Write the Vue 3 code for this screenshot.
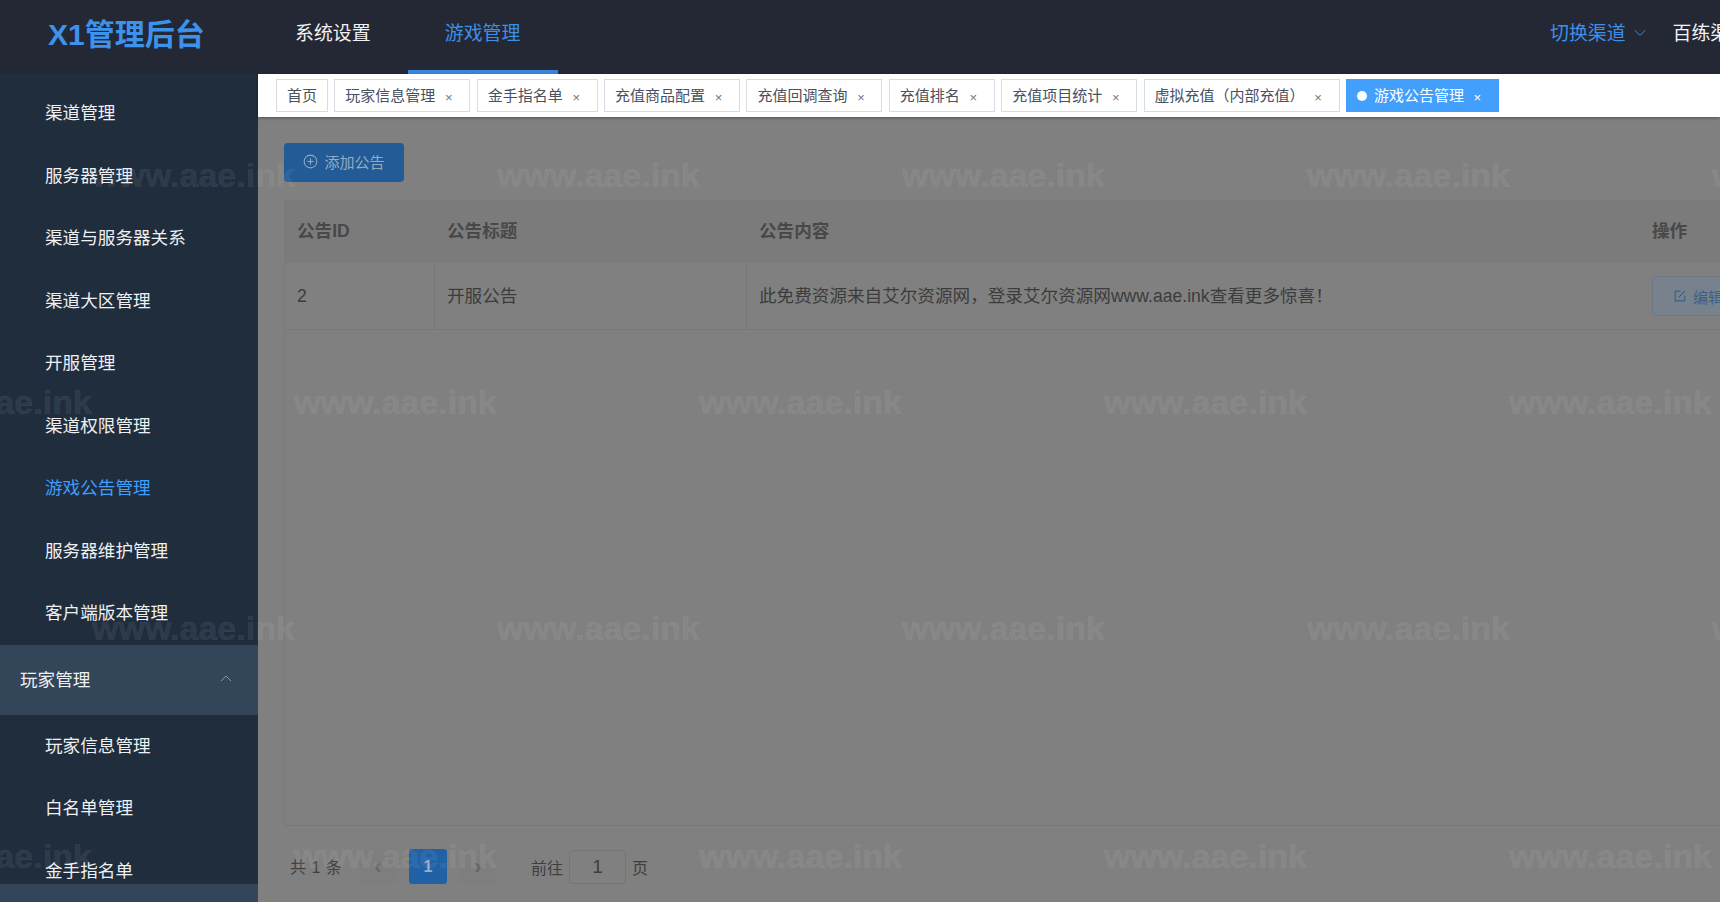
<script setup>
const groupOne = ['渠道管理', '服务器管理', '渠道与服务器关系', '渠道大区管理', '开服管理', '渠道权限管理', '游戏公告管理', '服务器维护管理', '客户端版本管理']
const groupTwo = ['玩家信息管理', '白名单管理', '金手指名单']
const tabs = [
  { label: '首页' },
  { label: '玩家信息管理', close: true },
  { label: '金手指名单', close: true },
  { label: '充值商品配置', close: true },
  { label: '充值回调查询', close: true },
  { label: '充值排名', close: true },
  { label: '充值项目统计', close: true },
  { label: '虚拟充值（内部充值）', close: true },
  { label: '游戏公告管理', close: true, active: true }
]
const rowA = [92, 497, 902, 1307, 1712]
const rowB = [-111, 294, 699, 1104, 1509]
const marks = []
;[[175, rowA], [402, rowB], [628, rowA], [856, rowB]].forEach(([y, xs]) => {
  xs.forEach((x) => marks.push({ x, y }))
})
</script>

<template>
  <div class="app">
    <header class="topbar">
      <div class="logo">X1管理后台</div>
      <nav class="topnav">
        <a class="topnav-item">系统设置</a>
        <a class="topnav-item on">游戏管理</a>
      </nav>
      <div class="top-right">
        <span class="channel">切换渠道</span>
        <svg class="chev" viewBox="0 0 12 8" width="12" height="8"><path d="M1 1.5 6 6.5 11 1.5" fill="none" stroke="currentColor" stroke-width="1"/></svg>
        <span class="user">百练渠道</span>
      </div>
    </header>
    <div class="body">
      <aside class="sidebar">
        <ul class="list">
          <li v-for="m in groupOne" :key="m" class="item" :class="{ current: m === '游戏公告管理' }">{{ m }}</li>
        </ul>
        <div class="group">
          <span class="group-label">玩家管理</span>
          <svg class="up" viewBox="0 0 12 7" width="12" height="7"><path d="M1 6 6 1 11 6" fill="none" stroke="currentColor" stroke-width="1"/></svg>
        </div>
        <ul class="list">
          <li v-for="m in groupTwo" :key="m" class="item">{{ m }}</li>
        </ul>
        <div class="group next"></div>
      </aside>
      <main class="main">
        <div class="tabbar">
          <div v-for="t in tabs" :key="t.label" class="tab" :class="{ active: t.active, closable: t.close }">
            <i v-if="t.active" class="dot"></i>
            <span class="tab-label">{{ t.label }}</span>
            <span v-if="t.close" class="x">×</span>
          </div>
        </div>
        <section class="content">
          <button class="add">
            <svg viewBox="0 0 16 16" width="15" height="15"><circle cx="8" cy="8" r="6.8" fill="none" stroke="currentColor" stroke-width="1.1"/><path d="M8 4.6v6.8M4.6 8h6.8" stroke="currentColor" stroke-width="1.1"/></svg>
            <span>添加公告</span>
          </button>
          <div class="table">
            <div class="thead">
              <div class="c c1">公告ID</div>
              <div class="c c2">公告标题</div>
              <div class="c c3">公告内容</div>
              <div class="c c4">操作</div>
            </div>
            <div class="trow">
              <div class="c c1">2</div>
              <div class="c c2">开服公告</div>
              <div class="c c3">此免费资源来自艾尔资源网，登录艾尔资源网www.aae.ink查看更多惊喜！</div>
              <div class="c c4">
                <button class="edit">
                  <svg viewBox="0 0 16 16" width="14" height="14"><path d="M8.5 2.5H2.5v11h11V7.5M6.5 9.5 13.5 2.5" fill="none" stroke="currentColor" stroke-width="1.3"/></svg>
                  <span>编辑</span>
                </button>
              </div>
            </div>
          </div>
          <div class="pager">
            <span class="total">共 1 条</span>
            <span class="pg side">‹</span>
            <span class="pg cur">1</span>
            <span class="pg side">›</span>
            <span class="goto">前往</span>
            <span class="input">1</span>
            <span class="page-word">页</span>
          </div>
        </section>
      </main>
    </div>
    <div class="marks">
      <span v-for="(m, i) in marks" :key="i" class="mark" :style="{ left: m.x + 'px', top: m.y + 'px' }">www.aae.ink</span>
    </div>
  </div>
</template>

<style scoped>
.app {
  position: relative;
  height: 902px;
  width: 1720px;
  overflow: hidden;
  display: flex;
  flex-direction: column;
  font-family: "Liberation Sans", "Noto Sans CJK SC", sans-serif;
}
.topbar {
  height: 74px;
  flex: none;
  background: #242834;
  display: flex;
  align-items: center;
  color: #fff;
}
.logo {
  margin: -11px 0 0 48px;
  width: 247px;
  flex: none;
  font-size: 30px;
  font-weight: 700;
  color: #3d92ec;
}
.topnav {
  display: flex;
  height: 74px;
}
.topnav-item {
  box-sizing: border-box;
  display: flex;
  align-items: center;
  font-size: 18.9px;
  color: #f2f2f2;
  padding-bottom: 11px;
  margin-right: 37px;
}
.topnav-item.on {
  width: 150px;
  margin-right: 0;
  justify-content: center;
  color: #3d8fe8;
  border-bottom: 4px solid #3b86dc;
  padding-bottom: 7px;
}
.top-right {
  margin-left: auto;
  display: flex;
  align-items: center;
  font-size: 18.9px;
  white-space: nowrap;
  width: 170px;
  flex: none;
  overflow: hidden;
  margin-top: -11px;
}
.channel { color: #3d8fe8; }
.chev { color: #3d8fe8; margin: 3px 0 0 8px; flex: none; }
.user { margin-left: 27px; color: #f4f4f4; }
.body {
  flex: 1;
  display: flex;
  min-height: 0;
}
.sidebar {
  width: 258px;
  flex: none;
  background: #1f2d3d;
  overflow: hidden;
  padding-top: 8px;
  box-sizing: border-box;
}
.list {
  list-style: none;
  margin: 0;
  padding: 0;
}
.item {
  height: 62.5px;
  line-height: 62px;
  padding-left: 45px;
  font-size: 17.6px;
  color: #eef0f2;
  white-space: nowrap;
}
.item.current { color: #409eff; }
.group {
  height: 70px;
  background: #324559;
  display: flex;
  align-items: center;
  justify-content: space-between;
  padding: 0 26px 0 20px;
  font-size: 17.6px;
  color: #eef0f2;
}
.group-label { margin-top: -3px; }
.group.next { margin-top: -18px; position: relative; }
.up { color: #8a97a5; margin-top: -3px; }
.main {
  flex: 1;
  min-width: 0;
  display: flex;
  flex-direction: column;
  background: #808080;
}
.tabbar {
  height: 43px;
  flex: none;
  box-sizing: border-box;
  background: #fff;
  display: flex;
  gap: 6.35px;
  padding: 5px 0 0 18px;
  box-shadow: 0 1px 3px rgba(0, 0, 0, 0.35);
  position: relative;
}
.tab {
  height: 33px;
  box-sizing: border-box;
  border: 1px solid #d8dce5;
  background: #fff;
  color: #495060;
  font-size: 15px;
  display: flex;
  align-items: center;
  padding: 0 10px;
  white-space: nowrap;
}
.tab-label { margin-top: -2px; }
.tab.closable { padding-right: 15px; }
.tab.active {
  background: #42a0fc;
  border-color: #42a0fc;
  color: #fff;
}
.dot {
  width: 10px;
  height: 10px;
  border-radius: 50%;
  background: #fff;
  margin-right: 7px;
}
.x {
  font-size: 13px;
  margin-left: 8px;
  width: 11px;
  text-align: center;
  color: #777;
  padding-top: 3px;
}
.tab.active .x { color: #fff; }
.content {
  flex: 1;
  min-height: 0;
  overflow: hidden;
  box-sizing: border-box;
  padding: 26px 0 0 26px;
}
.add {
  width: 120px;
  height: 39px;
  border: 0;
  border-radius: 4px;
  background: #225b96;
  color: #94abc4;
  display: flex;
  align-items: center;
  justify-content: center;
  gap: 6px;
  font: inherit;
  font-size: 15px;
  padding: 0 0 2px;
}
.table {
  width: 1530px;
  height: 626px;
  margin-top: 18px;
  box-sizing: border-box;
  border-left: 1px solid #7a7a7a;
  border-bottom: 1px solid #777;
}
.thead, .trow {
  display: grid;
  grid-template-columns: 150px 312px 889px 179px;
}
.thead {
  height: 63px;
  background: #7b7b7b;
  font-size: 17.6px;
  font-weight: 700;
  color: #484848;
}
.thead .c { padding-bottom: 4px; }
.trow {
  height: 67px;
  font-size: 17.6px;
  color: #3c3c3c;
  border-bottom: 1px solid #797979;
  box-sizing: border-box;
}
.trow .c2, .trow .c3 { padding-bottom: 4px; }
.c {
  display: flex;
  align-items: center;
  padding-left: 12px;
  min-width: 0;
  white-space: nowrap;
}
.c4 { padding-left: 16px; }
.trow .c1, .trow .c2 { border-right: 1px solid #787878; }
.edit {
  width: 110px;
  height: 40px;
  flex: none;
  border: 1px solid #6d7883;
  border-radius: 4px;
  background: #78828c;
  color: #3a5f8a;
  display: flex;
  align-items: center;
  gap: 6px;
  padding: 0 0 0 20px;
  font: inherit;
  font-size: 15px;
}
.pager {
  display: flex;
  align-items: center;
  margin: 23px 0 0 6px;
  height: 35px;
  color: #3f3f3f;
  font-size: 16px;
}
.total { width: 69px; word-spacing: 1px; margin-top: -2px; }
.pg {
  width: 38px;
  height: 35px;
  display: flex;
  align-items: center;
  justify-content: center;
  border-radius: 3px;
  margin-right: 12px;
  font-weight: 700;
}
.pg.side {
  background: #7e7e7e;
  color: #666;
  font-size: 22px;
}
.pg.cur {
  background: #2161a6;
  color: #98aec6;
}
.goto { margin-left: 22px; font-size: 16px; }
.input {
  width: 57px;
  height: 34px;
  box-sizing: border-box;
  border: 1px solid #747474;
  border-radius: 4px;
  margin: 0 6px;
  display: flex;
  align-items: center;
  justify-content: center;
  font-size: 19px;
}
.page-word { font-size: 16px; }
.marks {
  position: absolute;
  inset: 0;
  pointer-events: none;
}
.mark {
  position: absolute;
  transform: translateY(-50%);
  font-size: 34px;
  font-weight: 700;
  line-height: 1;
  color: rgba(255, 255, 255, 0.085);
  -webkit-text-stroke: 0.5px rgba(255, 255, 255, 0.085);
  white-space: nowrap;
}
</style>
